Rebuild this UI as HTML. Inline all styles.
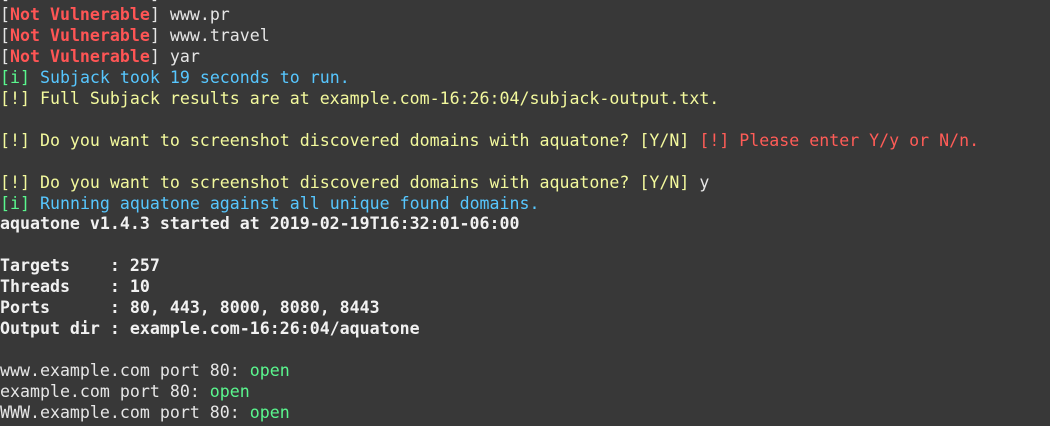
<!DOCTYPE html>
<html><head><meta charset="utf-8"><style>
html,body{margin:0;padding:0;background:#383838;width:1050px;height:426px;overflow:hidden}
pre{margin:0;position:absolute;left:0;top:-16px;font-family:"DejaVu Sans Mono","Liberation Mono",monospace;font-size:16.6px;line-height:20.95px;color:#e6e6e6;white-space:pre}
.r{color:#ff5555;font-weight:bold}
.b{color:#57c7ff}
.g{color:#5af78e}
.y{color:#f3f99d}
.rr{color:#ff5c57}
.w{font-weight:bold;color:#f1f1f1}
</style></head><body><pre>[<span class="r">Not Vulnerable</span>] www.x
[<span class="r">Not Vulnerable</span>] www.pr
[<span class="r">Not Vulnerable</span>] www.travel
[<span class="r">Not Vulnerable</span>] yar
<span class="g">[i]</span> <span class="b">Subjack took 19 seconds to run.</span>
<span class="y">[!] Full Subjack results are at example.com-16:26:04/subjack-output.txt.</span>

<span class="y">[!] Do you want to screenshot discovered domains with aquatone? [Y/N]</span> <span class="rr">[!] Please enter Y/y or N/n.</span>

<span class="y">[!] Do you want to screenshot discovered domains with aquatone? [Y/N]</span> y
<span class="g">[i]</span> <span class="b">Running aquatone against all unique found domains.</span>
<span class="w">aquatone v1.4.3 started at 2019-02-19T16:32:01-06:00</span>

<span class="w">Targets    : 257</span>
<span class="w">Threads    : 10</span>
<span class="w">Ports      : 80, 443, 8000, 8080, 8443</span>
<span class="w">Output dir : example.com-16:26:04/aquatone</span>

www.example.com port 80: <span class="g">open</span>
example.com port 80: <span class="g">open</span>
WWW.example.com port 80: <span class="g">open</span>
</pre></body></html>
